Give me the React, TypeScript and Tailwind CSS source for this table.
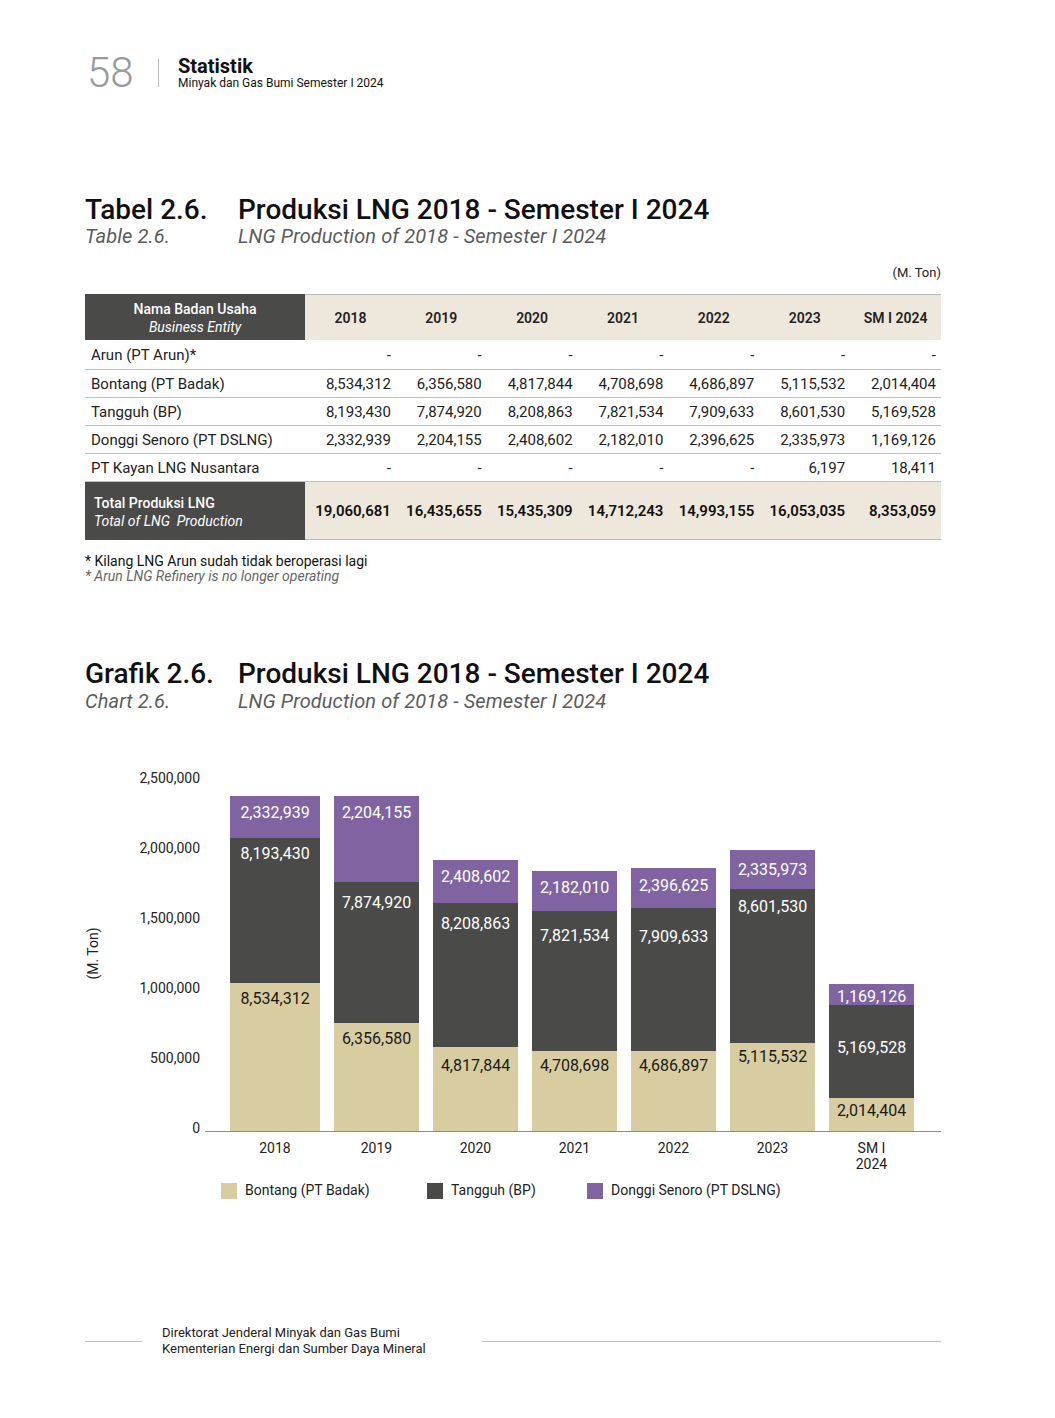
import React from 'react'

const years = ['2018', '2019', '2020', '2021', '2022', '2023', 'SM I 2024']

const rows = [
  { name: 'Arun (PT Arun)*', vals: ['-', '-', '-', '-', '-', '-', '-'] },
  { name: 'Bontang (PT Badak)', vals: ['8,534,312', '6,356,580', '4,817,844', '4,708,698', '4,686,897', '5,115,532', '2,014,404'] },
  { name: 'Tangguh (BP)', vals: ['8,193,430', '7,874,920', '8,208,863', '7,821,534', '7,909,633', '8,601,530', '5,169,528'] },
  { name: 'Donggi Senoro (PT DSLNG)', vals: ['2,332,939', '2,204,155', '2,408,602', '2,182,010', '2,396,625', '2,335,973', '1,169,126'] },
  { name: 'PT Kayan LNG Nusantara', vals: ['-', '-', '-', '-', '-', '6,197', '18,411'] },
]

const totals = ['19,060,681', '16,435,655', '15,435,309', '14,712,243', '14,993,155', '16,053,035', '8,353,059']

// pixel geometry read off the chart: segment tops (y) and label centres (y); axis at 1131
const AXIS = 1131
const bars = [
  { label: ['2018'], w: 90, tops: [796, 838, 983], labels: [812, 853, 998] },
  { label: ['2019'], w: 85, tops: [796, 882, 1023], labels: [812, 902, 1038] },
  { label: ['2020'], w: 85, tops: [860, 903, 1047], labels: [876, 923, 1065] },
  { label: ['2021'], w: 85, tops: [871, 911, 1051], labels: [887, 935, 1065] },
  { label: ['2022'], w: 85, tops: [868, 908, 1051], labels: [885, 936, 1065] },
  { label: ['2023'], w: 85, tops: [850, 889, 1043], labels: [869, 906, 1056] },
  { label: ['SM I', '2024'], w: 85, tops: [984, 1005, 1098], labels: [996, 1047, 1110] },
]

const segStyle = [
  'bg-[#8064a2] text-white',
  'bg-[#4a4a48] text-white',
  'bg-[#d8cda0] text-[#1a1a1a]',
]

function Bar({ i }: { i: number }) {
  const b = bars[i]
  const vals = [rows[3].vals[i], rows[2].vals[i], rows[1].vals[i]]
  const bottoms = [b.tops[1], b.tops[2], AXIS]
  return (
    <div className="flex flex-col" style={{ width: b.w }}>
      {vals.map((v, k) => (
        <div
          key={k}
          className={`${segStyle[k]} text-center text-[16px] leading-[18px]`}
          style={{ height: bottoms[k] - b.tops[k], paddingTop: b.labels[k] - b.tops[k] - 8 }}
        >
          {v}
        </div>
      ))}
    </div>
  )
}

export default function App() {
  return (
    <div className="w-[1055px] h-[1418px] bg-white text-[#1a1a1a]" style={{ fontFamily: 'Roboto, "Liberation Sans", sans-serif' }}>
      <div className="pl-[85px] w-[941px]">
        {/* page header */}
        <div className="flex items-center pt-[50px]">
          <div className="text-[42px] leading-[46px] font-light text-[#9a9a9a] w-[73px] pl-[2px]">58</div>
          <div className="w-px h-[28px] bg-[#bdbdbd]" />
          <div className="ml-[19px] -mt-[2px]">
            <div className="text-[20px] leading-[22px] font-bold text-[#111]">Statistik</div>
            <div className="text-[12px] leading-[13px] text-[#111]">Minyak dan Gas Bumi Semester I 2024</div>
          </div>
        </div>

        {/* table title */}
        <div className="mt-[99px] flex">
          <div className="w-[153px]">
            <div className="text-[28px] leading-[30px] font-medium text-[#111]">Tabel 2.6.</div>
            <div className="text-[20px] leading-[23px] italic text-[#5c5c5c] tracking-[0.1px]">Table 2.6.</div>
          </div>
          <div>
            <div className="text-[28px] leading-[30px] font-medium text-[#111]">Produksi LNG 2018 - Semester I 2024</div>
            <div className="text-[20px] leading-[23px] italic text-[#5c5c5c] tracking-[0.1px]">LNG Production of 2018 - Semester I 2024</div>
          </div>
        </div>

        <div className="mt-[17px] text-right text-[13px] leading-[16px] text-[#222]">(M. Ton)</div>

        {/* table */}
        <div className="mt-[13px] grid grid-cols-[220px_repeat(7,1fr)] text-[15px]">
          <div className="h-[46px] bg-[#4a4a48] text-white text-[14px] leading-[18px] flex flex-col items-center justify-center pt-[1px]">
            <div className="font-medium">Nama Badan Usaha</div>
            <div className="italic">Business Entity</div>
          </div>
          {years.map(y => (
            <div key={y} className="h-[46px] bg-[#eee8dc] border-t border-[#b9b9b9] flex items-center justify-center text-[14px] font-semibold text-[#222] pt-[1px]">
              {y}
            </div>
          ))}

          {rows.map((r, ri) => (
            <React.Fragment key={r.name}>
              <div className={`${ri === 0 ? 'h-[30px]' : 'h-[28px]'} border-b border-[#bfbfbf] flex items-center pl-[6px] pt-[1px] text-[#222]`}>
                {r.name}
              </div>
              {r.vals.map((v, vi) => (
                <div key={vi} className={`${ri === 0 ? 'h-[30px]' : 'h-[28px]'} border-b border-[#bfbfbf] flex items-center justify-end pr-[5px] pt-[1px] text-[#222]`}>
                  {v}
                </div>
              ))}
            </React.Fragment>
          ))}

          <div className="h-[58px] bg-[#4a4a48] text-white text-[14px] leading-[18px] flex flex-col justify-center pl-[9px] pt-[1px]">
            <div className="font-medium">Total Produksi LNG</div>
            <div className="italic">Total of LNG&nbsp; Production</div>
          </div>
          {totals.map((v, i) => (
            <div key={i} className="h-[58px] bg-[#eee8dc] border-b border-[#b9b9b9] flex items-center justify-end pr-[5px] pt-[1px] font-semibold text-[#111]">
              {v}
            </div>
          ))}
        </div>

        <div className="mt-[14px] text-[14px] leading-[15px]">
          <div className="text-[#111]">* Kilang LNG Arun sudah tidak beroperasi lagi</div>
          <div className="italic text-[#666]">* Arun LNG Refinery is no longer operating</div>
        </div>

        {/* chart title */}
        <div className="mt-[75px] flex">
          <div className="w-[153px]">
            <div className="text-[28px] leading-[30px] font-medium text-[#111]">Grafik 2.6.</div>
            <div className="text-[20px] leading-[24px] italic text-[#5c5c5c] tracking-[0.1px]">Chart 2.6.</div>
          </div>
          <div>
            <div className="text-[28px] leading-[30px] font-medium text-[#111]">Produksi LNG 2018 - Semester I 2024</div>
            <div className="text-[20px] leading-[24px] italic text-[#5c5c5c] tracking-[0.1px]">LNG Production of 2018 - Semester I 2024</div>
          </div>
        </div>

        {/* chart */}
        <div className="mt-[57px] flex items-start">
          <div className="w-[16px] h-[366px] flex items-center justify-center">
            <div className="-rotate-90 whitespace-nowrap text-[14px] text-[#222]">(M. Ton)</div>
          </div>
          <div className="w-[99px] h-[366px] flex flex-col justify-between items-end text-[14px] leading-[16px] text-[#222]">
            {['2,500,000', '2,000,000', '1,500,000', '1,000,000', '500,000', '0'].map(t => (
              <div key={t}>{t}</div>
            ))}
          </div>
          <div className="ml-[5px] w-[736px] mt-[8px]">
            <div className="h-[354px] border-b border-[#8c8c8c] flex items-end gap-[14px] pl-[25px]">
              {bars.map((_, i) => <Bar key={i} i={i} />)}
            </div>
            <div className="flex gap-[14px] pl-[25px] pt-[8px] text-[14px] leading-[16px] text-[#222]">
              {bars.map((b, i) => (
                <div key={i} className="text-center" style={{ width: b.w }}>
                  {b.label.map(l => <div key={l}>{l}</div>)}
                </div>
              ))}
            </div>
          </div>
        </div>

        {/* legend */}
        <div className="mt-[8px] flex items-center text-[14px] text-[#222] pl-[136px]">
          <div className="flex items-center gap-[8px] w-[206px]">
            <div className="w-[16px] h-[16px] bg-[#d8cda0]" />
            <span>Bontang (PT Badak)</span>
          </div>
          <div className="flex items-center gap-[8px] w-[160px]">
            <div className="w-[16px] h-[16px] bg-[#4a4a48]" />
            <span>Tangguh (BP)</span>
          </div>
          <div className="flex items-center gap-[8px]">
            <div className="w-[16px] h-[16px] bg-[#8064a2]" />
            <span>Donggi Senoro (PT DSLNG)</span>
          </div>
        </div>

        {/* footer */}
        <div className="mt-[124px] flex items-center">
          <div className="w-[57px] h-px bg-[#bdbdbd]" />
          <div className="ml-[20px] w-[320px] text-[13px] leading-[16px] text-[#222]">
            <div>Direktorat Jenderal Minyak dan Gas Bumi</div>
            <div>Kementerian Energi dan Sumber Daya Mineral</div>
          </div>
          <div className="flex-1 h-px bg-[#bdbdbd]" />
        </div>
      </div>
    </div>
  )
}
